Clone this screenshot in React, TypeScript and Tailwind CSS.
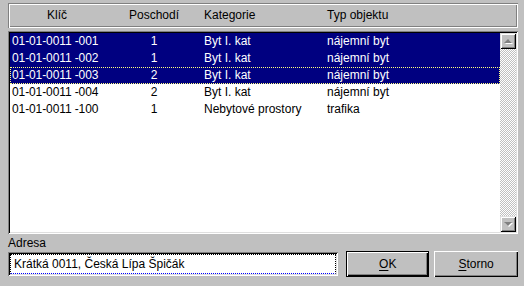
import React from "react";

const rows = [
  { k: "01-01-0011 -001", p: "1", c: "Byt I. kat", t: "nájemní byt", sel: true, focus: false },
  { k: "01-01-0011 -002", p: "1", c: "Byt I. kat", t: "nájemní byt", sel: true, focus: false },
  { k: "01-01-0011 -003", p: "2", c: "Byt I. kat", t: "nájemní byt", sel: true, focus: true },
  { k: "01-01-0011 -004", p: "2", c: "Byt I. kat", t: "nájemní byt", sel: false, focus: false },
  { k: "01-01-0011 -100", p: "1", c: "Nebytové prostory", t: "trafika", sel: false, focus: false },
];

function Arrow({ up }: { up: boolean }) {
  return (
    <svg width="12" height="12" viewBox="0 0 12 12">
      {up ? (
        <>
          <polygon points="7,5 11,9 3,9" fill="#ffffff" />
          <polygon points="6,4 10,8 2,8" fill="#808080" />
        </>
      ) : (
        <>
          <polygon points="3,5 11,5 7,9" fill="#ffffff" />
          <polygon points="2,4 10,4 6,8" fill="#808080" />
        </>
      )}
    </svg>
  );
}

export default function App() {
  return (
    <div
      className="w-[524px] h-[286px] bg-[#c0c0c0] pl-[8px] pr-[6px] pt-[3px] text-[12px] text-black overflow-hidden"
      style={{ fontFamily: '"Liberation Sans", Arial, sans-serif' }}
    >
      {/* header */}
      <div className="w-[510px] h-[25px] p-[2px] shadow-[inset_1px_1px_0_#808080,inset_-1px_-1px_0_#fff,inset_2px_2px_0_#fff,inset_-2px_-2px_0_#808080] grid grid-cols-[94px_100px_123px_1fr] items-center leading-[21px]">
        <div className="text-center">Klíč</div>
        <div className="text-center">Poschodí</div>
        <div>Kategorie</div>
        <div>Typ objektu</div>
      </div>

      {/* list */}
      <div className="mt-[3px] w-[510px] h-[203px] p-[2px] bg-white shadow-[inset_1px_1px_0_#808080,inset_-1px_-1px_0_#fff,inset_2px_2px_0_#000,inset_-2px_-2px_0_#dfdfdf] flex">
        <div className="flex-1 flex flex-col">
          {rows.map((r, i) => (
            <div
              key={i}
              className={
                "h-[17px] leading-[15px] grid grid-cols-[94px_100px_123px_1fr] border border-dotted " +
                (r.sel ? "bg-[#000080] text-white " : "text-black ") +
                (r.focus ? "border-[#ffff7f]" : "border-transparent")
              }
            >
              <div className="pl-[1px] tracking-[-0.1px] whitespace-nowrap">{r.k}</div>
              <div className="text-center pr-[2px]">{r.p}</div>
              <div className="-ml-[1px]">{r.c}</div>
              <div className="-ml-[1px]">{r.t}</div>
            </div>
          ))}
        </div>
        <div className="w-[16px] flex flex-col">
          <div className="h-[16px] bg-[#c0c0c0] shadow-[inset_1px_1px_0_#dfdfdf,inset_-1px_-1px_0_#000,inset_2px_2px_0_#fff,inset_-2px_-2px_0_#808080] flex items-center justify-center">
            <Arrow up={true} />
          </div>
          <div className="flex-1 bg-[repeating-conic-gradient(#ffffff_0_25%,#c0c0c0_0_50%)] bg-[length:2px_2px]" />
          <div className="h-[16px] bg-[#c0c0c0] shadow-[inset_1px_1px_0_#dfdfdf,inset_-1px_-1px_0_#000,inset_2px_2px_0_#fff,inset_-2px_-2px_0_#808080] flex items-center justify-center">
            <Arrow up={false} />
          </div>
        </div>
      </div>

      {/* bottom */}
      <div className="flex items-start">
        <div className="w-[331px] pt-[2px]">
          <div className="leading-[14px]">Adresa</div>
          <div className="mt-[2px] h-[24px] p-[2px] bg-white shadow-[inset_1px_1px_0_#808080,inset_-1px_-1px_0_#fff,inset_2px_2px_0_#000,inset_-2px_-2px_0_#dfdfdf]">
            <div className="h-full border border-dotted border-black border-b-[#0000ff] pl-[3px] leading-[18px]">
              Krátká 0011, Česká Lípa Špičák
            </div>
          </div>
        </div>
        <div className="mt-[17px] ml-[8px] w-[83px] h-[26px] border border-black">
          <div className="w-full h-full shadow-[inset_1px_1px_0_#fff,inset_-1px_-1px_0_#000,inset_-2px_-2px_0_#808080] flex items-center justify-center">
            <span>
              <span className="underline underline-offset-2">O</span>K
            </span>
          </div>
        </div>
        <div className="mt-[17px] ml-[5px] w-[84px] h-[26px] shadow-[inset_1px_1px_0_#fff,inset_-1px_-1px_0_#000,inset_-2px_-2px_0_#808080] flex items-center justify-center">
          <span>
            <span className="underline underline-offset-2">S</span>torno
          </span>
        </div>
      </div>
    </div>
  );
}
